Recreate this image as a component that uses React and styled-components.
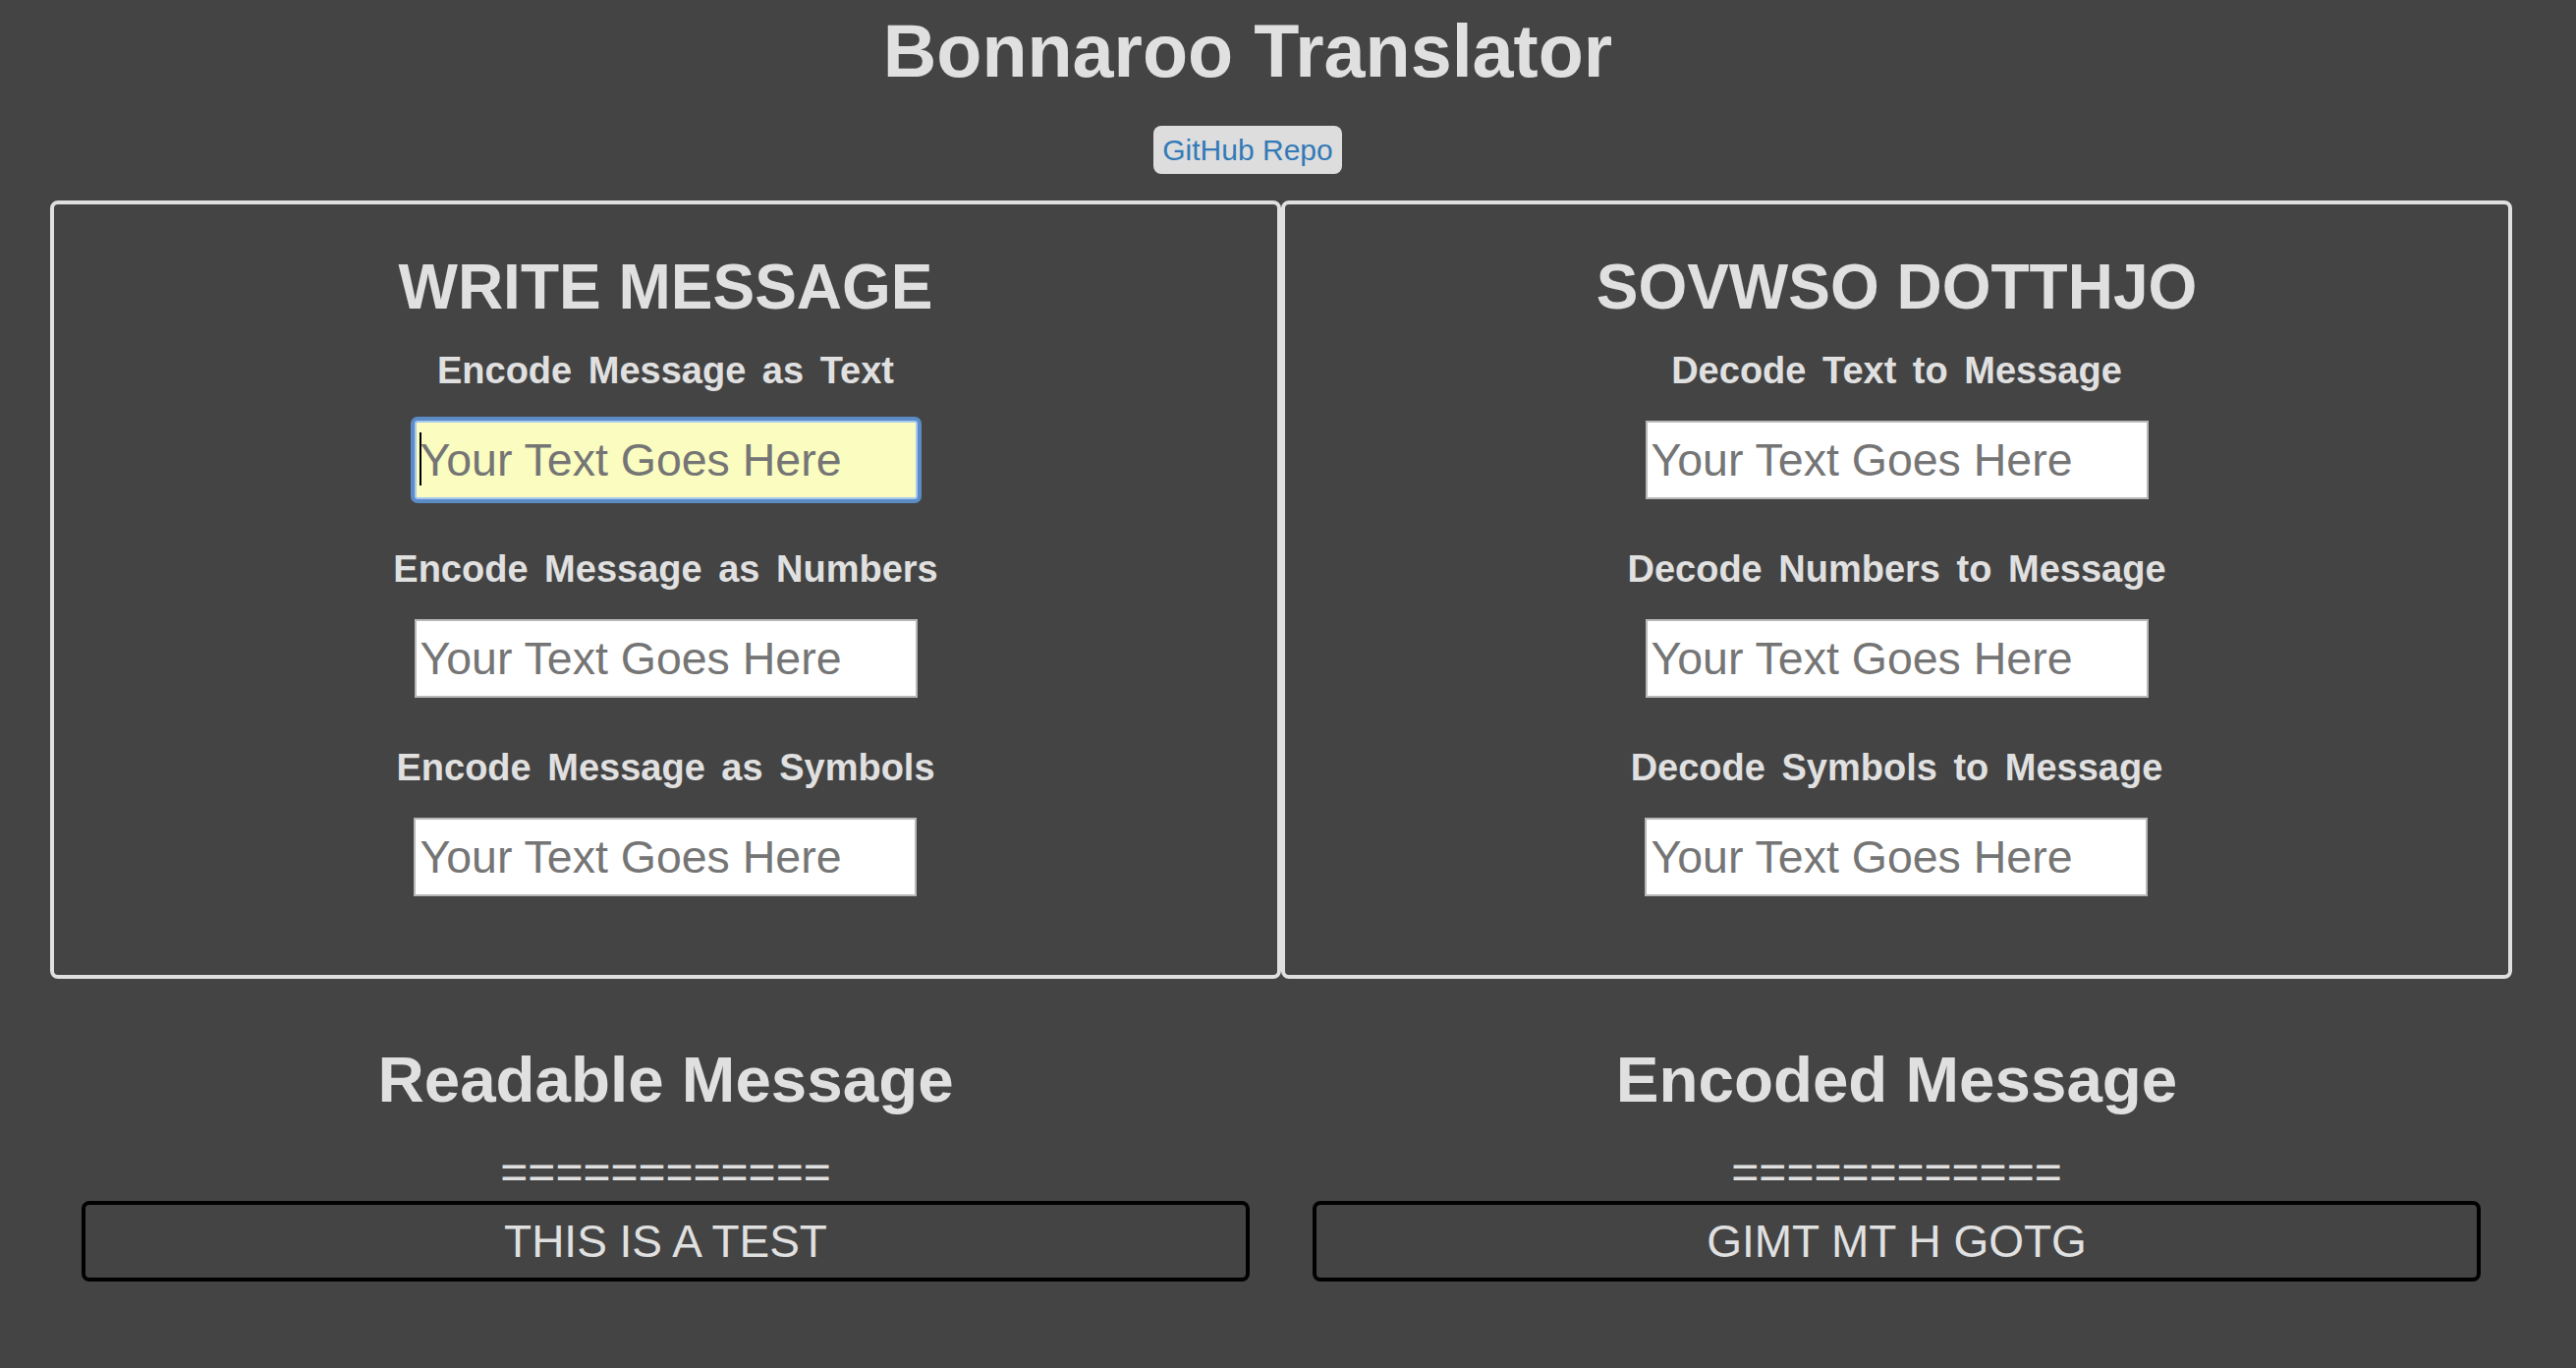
import React from 'react';
import styled, { createGlobalStyle } from 'styled-components';

const GlobalStyle = createGlobalStyle`
  body {
    margin: 0;
    background: #444444;
    font-family: "Liberation Sans", Arial, Helvetica, sans-serif;
    color: #e0e0e0;
  }
`;

const encoders = [
  'Encode Message as Text',
  'Encode Message as Numbers',
  'Encode Message as Symbols',
];

const decoders = [
  'Decode Text to Message',
  'Decode Numbers to Message',
  'Decode Symbols to Message',
];

const FieldGroup = ({ label, focused }) => (
  <Field>
    <Label>{label}</Label>
    <InputWrap>
      <TextInput type="text" placeholder="Your Text Goes Here" $focused={focused} />
      {focused && <Caret />}
    </InputWrap>
  </Field>
);

const App = () => (
  <Page>
    <GlobalStyle />
    <Header>
      <Title>Bonnaroo Translator</Title>
      <RepoButton>GitHub Repo</RepoButton>
    </Header>

    <Columns $top={27}>
      <Panel>
        <PanelTitle>WRITE MESSAGE</PanelTitle>
        {encoders.map((label, i) => (
          <FieldGroup key={label} label={label} focused={i === 0} />
        ))}
      </Panel>
      <Panel>
        <PanelTitle>SOVWSO DOTTHJO</PanelTitle>
        {decoders.map((label) => (
          <FieldGroup key={label} label={label} />
        ))}
      </Panel>
    </Columns>

    <Columns $top={0}>
      <Result>
        <ResultTitle>Readable Message</ResultTitle>
        <Divider>============</Divider>
        <OutputBox>THIS IS A TEST</OutputBox>
      </Result>
      <Result>
        <ResultTitle>Encoded Message</ResultTitle>
        <Divider>============</Divider>
        <OutputBox>GIMT MT H GOTG</OutputBox>
      </Result>
    </Columns>
  </Page>
);

export default App;

const Page = styled.div`
  min-height: 1392px;
  padding-top: 9px;
  box-sizing: border-box;
`;

const Header = styled.header`
  width: 2540px;
  display: flex;
  flex-direction: column;
  align-items: center;
`;

const Title = styled.h1`
  margin: 0;
  font-size: 75.5px;
  line-height: 86px;
  font-weight: bold;
  color: #e0e0e0;
`;

const RepoButton = styled.button`
  margin-top: 33px;
  height: 49px;
  padding: 0 9px;
  border: none;
  border-radius: 8px;
  background: #dddddd;
  color: #337ab7;
  font-family: "Liberation Sans", Arial, sans-serif;
  font-size: 30px;
  line-height: 33px;
  cursor: pointer;
`;

const Columns = styled.div`
  display: grid;
  grid-template-columns: 1253px 1253px;
  margin-left: 51px;
  margin-top: ${({ $top }) => $top}px;
`;

const Panel = styled.section`
  border: 4px solid #e0e0e0;
  border-radius: 8px;
  padding: 47px 0 80px;
  display: flex;
  flex-direction: column;
  align-items: center;
`;

const PanelTitle = styled.h2`
  margin: 0 0 26px;
  font-size: 64px;
  line-height: 74px;
  font-weight: bold;
  color: #e0e0e0;
`;

const Field = styled.div`
  display: flex;
  flex-direction: column;
  align-items: center;
  & + & {
    margin-top: 49px;
  }
`;

const Label = styled.h3`
  margin: 0 0 29px;
  font-size: 38px;
  line-height: 44px;
  font-weight: bold;
  word-spacing: 6px;
  color: #e0e0e0;
`;

const InputWrap = styled.div`
  position: relative;
`;

const TextInput = styled.input`
  display: block;
  width: 512px;
  height: 80px;
  box-sizing: border-box;
  padding: 0 4px;
  font-family: "Liberation Sans", Arial, sans-serif;
  font-size: 46.5px;
  color: #333;
  background: ${({ $focused }) => ($focused ? '#fafcc0' : '#ffffff')};
  border: 2px solid ${({ $focused }) => ($focused ? '#a9c9f0' : '#b8b8b8')};
  box-shadow: ${({ $focused }) => ($focused ? '0 0 0 4px #5b8cc6' : 'none')};
  border-radius: ${({ $focused }) => ($focused ? '3px' : '0')};
  outline: none;
  &::placeholder {
    color: #757575;
  }
`;

const Caret = styled.span`
  position: absolute;
  left: 5px;
  top: 12px;
  width: 2px;
  height: 54px;
  background: #000;
`;

const Result = styled.div`
  display: flex;
  flex-direction: column;
  align-items: center;
  padding: 66px 32px 0;
`;

const ResultTitle = styled.h2`
  margin: 0 0 29px;
  font-size: 65.5px;
  line-height: 74px;
  font-weight: bold;
  color: #e0e0e0;
`;

const Divider = styled.div`
  font-size: 48px;
  line-height: 55px;
  color: #e0e0e0;
  margin-bottom: 2px;
`;

const OutputBox = styled.div`
  align-self: stretch;
  height: 82px;
  box-sizing: border-box;
  border: 4px solid #000;
  border-radius: 8px;
  display: flex;
  align-items: center;
  justify-content: center;
  font-size: 46px;
  color: #e0e0e0;
`;
